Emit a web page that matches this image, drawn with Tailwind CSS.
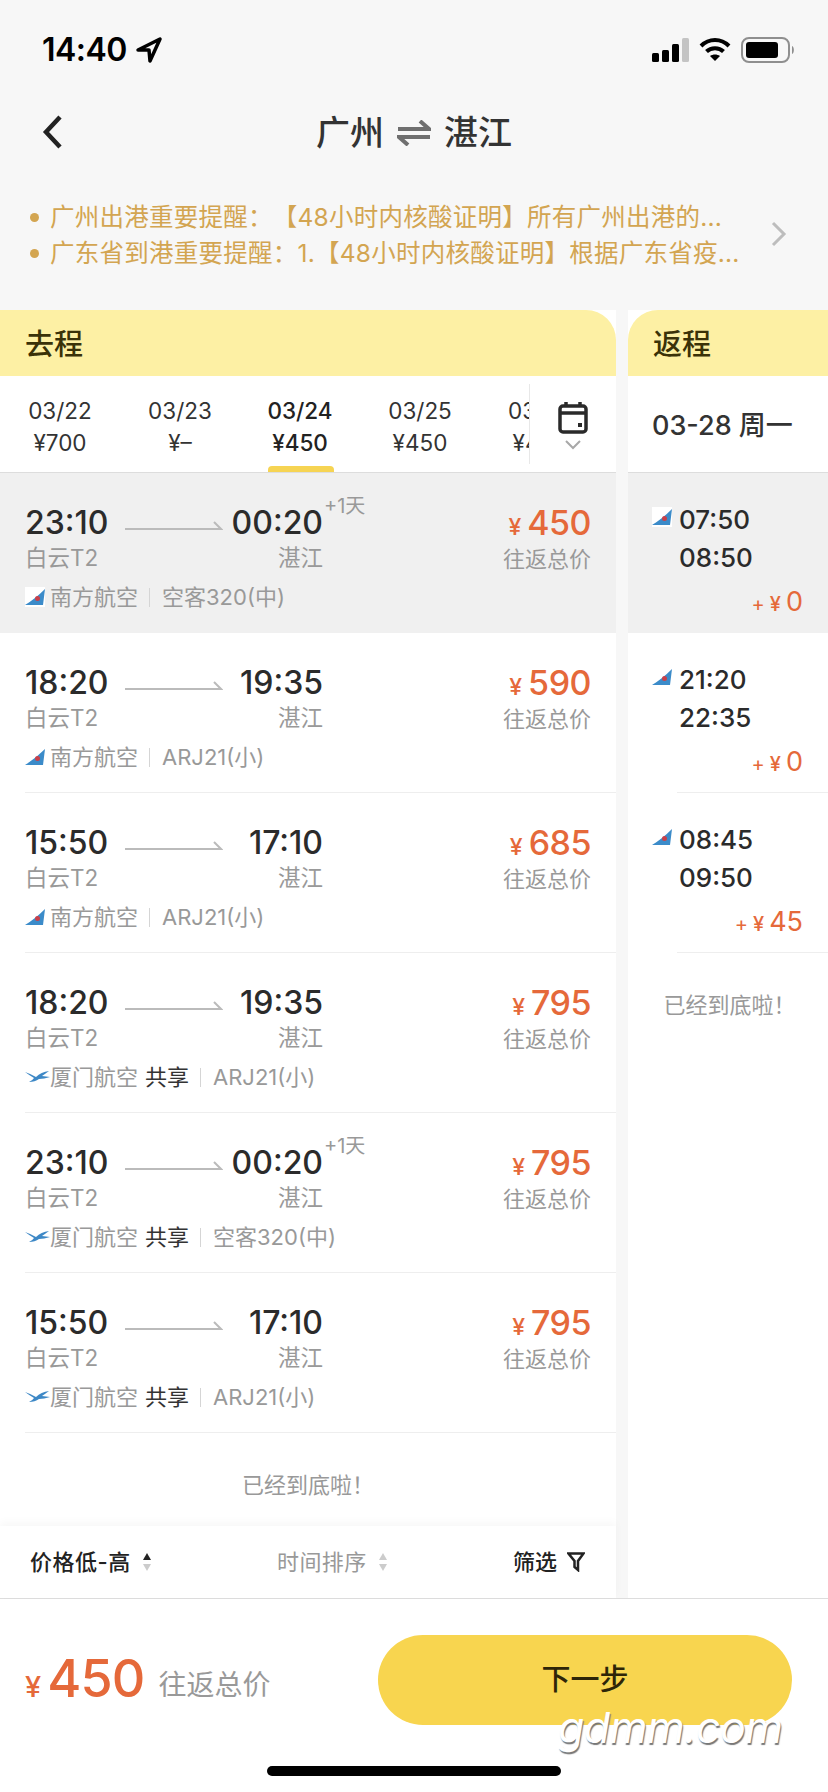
<!DOCTYPE html>
<html lang="zh">

<head>
  <meta charset="UTF-8" />
  <title>广州 湛江</title>
  <script src="https://cdn.jsdelivr.net/npm/@tailwindcss/browser@4"></script>
</head>

<body class="bg-white">
  <div class="relative w-[828px] h-[1792px] overflow-hidden flex flex-col bg-[#f7f7f7] text-[#2b2b2b] font-['Inter','Noto_Sans_CJK_SC',sans-serif]">

    <!-- status bar -->
    <div class="h-[100px] shrink-0 flex items-center justify-between pl-[42px] pr-[33px]">
      <div class="flex items-center gap-[9px]">
        <span class="text-[32px] leading-none font-semibold text-black tracking-[-0.5px]">14:40</span>
        <svg width="26" height="26" viewBox="0 0 26 26" fill="none" stroke="#000" stroke-width="3.500" stroke-linejoin="round">
          <path d="M2 13 L24 2 L14 24 L13 13 Z" />
        </svg>
      </div>
      <div class="flex items-center gap-[10px]">
        <svg width="37" height="24" viewBox="0 0 37 24" fill="#000">
          <rect x="0" y="15" width="7" height="9" rx="1.500" />
          <rect x="10" y="12" width="7" height="12" rx="1.500" />
          <rect x="20" y="6" width="7" height="18" rx="1.500" />
          <rect x="30" y="0" width="7" height="24" rx="1.500" fill="#c4c4c4" />
        </svg>
        <svg width="32" height="24" viewBox="0 0 32 24" fill="none" stroke="#000" stroke-width="4">
          <path d="M2 8 C10 0 22 0 30 8" />
          <path d="M7.500 13.500 C12 9 20 9 24.500 13.500" />
          <path d="M16 23 L11 18 C14 16 18 16 21 18 Z" fill="#000" stroke="none" />
        </svg>
        <svg width="54" height="26" viewBox="0 0 54 26" fill="none">
          <rect x="1" y="1" width="47" height="24" rx="7" stroke="#8f8f8f" stroke-width="2" />
          <rect x="5" y="5" width="32" height="16" rx="3" fill="#000" />
          <path d="M51 9 C53.500 10 53.500 16 51 17 Z" fill="#8f8f8f" />
        </svg>
      </div>
    </div>

    <!-- nav -->
    <div class="relative h-[65px] shrink-0 flex items-center justify-center">
      <svg class="absolute left-[40px] top-[15px]" width="24" height="34" viewBox="0 0 24 34" fill="none" stroke="#222" stroke-width="4.500">
        <path d="M20 2 L6 17 L20 32" />
      </svg>
      <div class="flex items-center gap-[13px] text-[34px] leading-none font-medium text-[#333]">
        <span>广州</span>
        <svg width="34" height="26" viewBox="0 0 34 26" fill="none" stroke="#6f6f6f" stroke-width="4">
          <path d="M1 9 H32 L23 1" />
          <path d="M33 17 H2 L11 25" />
        </svg>
        <span>湛江</span>
      </div>
    </div>

    <!-- notices -->
    <div class="relative h-[145px] shrink-0 pt-[34px] pl-[30px] text-[24.500px] leading-[36px] tracking-[0.25px] text-[#d3a551] [text-spacing-trim:space-all]">
      <div class="flex items-center gap-[11px]"><span class="w-[9px] h-[9px] rounded-full bg-[#d3a551]"></span><span class="whitespace-nowrap">广州出港重要提醒：【48小时内核酸证明】所有广州出港的...</span></div>
      <div class="flex items-center gap-[11px]"><span class="w-[9px] h-[9px] rounded-full bg-[#d3a551]"></span><span class="whitespace-nowrap">广东省到港重要提醒：1.【48小时内核酸证明】根据广东省疫...</span></div>
      <svg class="absolute left-[771px] top-[56px]" width="16" height="26" viewBox="0 0 16 26" fill="none" stroke="#bdbdbd" stroke-width="3">
        <path d="M2 2 L13 13 L2 24" />
      </svg>
    </div>

    <!-- two columns -->
    <div class="relative flex-1 flex gap-[12px] min-h-0">
      <div class="relative w-[616px] flex flex-col bg-white">
        <div class="h-[66px] shrink-0 rounded-tr-[30px] bg-[#fdf0a4] pl-[25px] pt-[3px] flex items-center text-[29px] font-medium text-[#3a3208]">去程</div>

        <!-- date strip -->
        <div class="relative h-[97px] shrink-0 flex border-b border-[#dddddd]">
          <div class="w-[530px] overflow-hidden flex border-r border-[#e8e8e8] my-[8px]">
            <div class="w-[120px] shrink-0 text-center text-[22.500px] leading-[32px] text-[#333] pt-[11px]">03/22<br />¥700</div>
            <div class="w-[120px] shrink-0 text-center text-[22.500px] leading-[32px] text-[#333] pt-[11px]">03/23<br />¥–</div>
            <div class="w-[120px] shrink-0 text-center text-[22.500px] leading-[32px] font-medium text-[#222] pt-[11px]">03/24<br />¥450</div>
            <div class="w-[120px] shrink-0 text-center text-[22.500px] leading-[32px] text-[#333] pt-[11px]">03/25<br />¥450</div>
            <div class="w-[120px] shrink-0 text-center text-[22.500px] leading-[32px] text-[#333] pt-[11px]">03/26<br />¥450</div>
          </div>
          <div class="flex-1 flex flex-col items-center pt-[25px]">
            <svg width="30" height="33" viewBox="0 0 30 33" fill="none" stroke="#2a2a2a" stroke-width="3.500">
              <rect x="2" y="5" width="26" height="26" rx="3" />
              <path d="M2 12 H28" />
              <path d="M8 1 V6 M22 1 V6" />
              <rect x="20" y="22" width="4" height="4" fill="#2a2a2a" stroke="none" />
            </svg>
            <svg class="mt-[6px]" width="16" height="10" viewBox="0 0 16 10" fill="none" stroke="#a8a8a8" stroke-width="2">
              <path d="M1 1 L8 8 L15 1" />
            </svg>
          </div>
          <div class="absolute left-[268px] bottom-0 w-[66px] h-[6px] rounded-t-[4px] bg-[#f6d453]"></div>
        </div>

        <div id="outbound"></div>
        <div class="pt-[36px] text-center text-[22px] leading-[32px] text-[#999]">已经到底啦！</div>

        <!-- sort bar -->
        <div class="absolute left-0 right-0 bottom-0 h-[72px] bg-white flex items-center text-[22px] font-medium shadow-[0_-4px_8px_rgba(0,0,0,0.03)]">
          <div class="w-[277px] pl-[30px] flex items-center gap-[11px] text-[#222]"><span class="tracking-[0.5px]">价格低-高</span>
            <svg width="10" height="20" viewBox="0 0 10 20"><path d="M5 1 L9 8 H1 Z" fill="#222" /><path d="M5 19 L9 12 H1 Z" fill="#ccc" /></svg>
          </div>
          <div class="w-[236px] flex items-center gap-[11px] font-normal tracking-[0.4px] text-[#999]">时间排序
            <svg width="10" height="20" viewBox="0 0 10 20"><path d="M5 1 L9 8 H1 Z" fill="#ccc" /><path d="M5 19 L9 12 H1 Z" fill="#ccc" /></svg>
          </div>
          <div class="flex items-center gap-[10px] text-[#222]">筛选
            <svg width="18" height="20" viewBox="0 0 18 20" fill="none" stroke="#222" stroke-width="2.500"><path d="M1.500 1.500 H16.500 L11 9 V18 L7.500 15 V9 Z" /></svg>
          </div>
        </div>
      </div>

      <div class="flex-1 flex flex-col bg-white">
        <div class="h-[66px] shrink-0 rounded-tl-[30px] bg-[#fdf0a4] pl-[25px] pt-[3px] flex items-center text-[29px] font-medium text-[#3a3208]">返程</div>
        <div class="h-[97px] shrink-0 flex items-center pl-[24px] pt-[4px] text-[27px] text-[#333] [font-weight:450] border-b border-[#dddddd] whitespace-nowrap">03-28 周一</div>
        <div id="inbound"></div>
        <div class="pt-[36px] pl-[3px] text-center text-[22px] leading-[32px] text-[#999]">已经到底啦！</div>
      </div>
    </div>

    <!-- bottom bar -->
    <div class="h-[194px] shrink-0 bg-white border-t border-[#dddddd] flex items-start pl-[25px]">
      <div class="flex items-baseline mt-[45px] text-[#e5693a]">
        <span class="text-[29px] font-medium mr-[6px]">¥</span>
        <span class="text-[52px] leading-[70px] font-medium tracking-[-0.8px]">450</span>
        <span class="text-[28px] ml-[14px] -translate-y-[2px] text-[#999]">往返总价</span>
      </div>
      <div class="ml-auto mr-[36px] mt-[36px] w-[414px] h-[90px] rounded-[45px] bg-[#f8d54f] flex items-center justify-center text-[29px] font-medium text-[#2e2508]">下一步</div>
    </div>

    <!-- watermark + home bar -->
    <div class="absolute left-[558px] top-[1701px] text-[43px] leading-[52px] italic text-white tracking-[-0.5px] [text-shadow:1px_2px_1px_#777]">gdmm.com</div>
    <div class="absolute left-[267px] top-[1766px] w-[294px] h-[10px] rounded-full bg-black"></div>
  </div>

  <script>
    const csn = `<svg width="21" height="20" viewBox="0 0 21 20"><rect width="20" height="20" fill="#fff"/><path d="M20 2 L18 18 H0 Q10 12 20 2 Z" fill="#3b8bc9"/><circle cx="12.500" cy="11.500" r="2.500" fill="#c9404a"/></svg>`;
    const xmn = `<svg width="25" height="12" viewBox="0 0 25 12"><path d="M0 1 Q6 3 11 6 Q16 1 24 0 Q20 3 17 5 L25 6 Q19 8 14 8 Q10 11 4 11 Q8 9 9 7 Q4 4 0 1 Z" fill="#3d88c6"/></svg>`;

    const flights = [
      { dep: '23:10', arr: '00:20', next: true, price: 450, logo: csn, name: '南方航空', plane: '空客320(中)', on: true },
      { dep: '18:20', arr: '19:35', price: 590, logo: csn, name: '南方航空', plane: 'ARJ21(小)' },
      { dep: '15:50', arr: '17:10', price: 685, logo: csn, name: '南方航空', plane: 'ARJ21(小)' },
      { dep: '18:20', arr: '19:35', price: 795, logo: xmn, name: '厦门航空', share: true, plane: 'ARJ21(小)' },
      { dep: '23:10', arr: '00:20', next: true, price: 795, logo: xmn, name: '厦门航空', share: true, plane: '空客320(中)' },
      { dep: '15:50', arr: '17:10', price: 795, logo: xmn, name: '厦门航空', share: true, plane: 'ARJ21(小)' },
    ];

    document.getElementById('outbound').innerHTML = flights.map(f => `
      <div class="relative h-[160px] pl-[25px] ${f.on ? 'bg-[#f0f0f0]' : ''}">
        <div class="flex h-full flex-col ${f.on ? '' : 'border-b border-[#eeeeee]'} pr-[25px] pt-[28px]">
          <div class="flex">
            <div class="w-[100px]">
              <div class="text-[32px] leading-[44px] font-medium">${f.dep}</div>
              <div class="text-[22.500px] leading-[26px] text-[#999]">白云T2</div>
            </div>
            <svg class="mt-[18px]" width="98" height="12" viewBox="0 0 98 12" fill="none" stroke="#bbb" stroke-width="2"><path d="M0 10 H96 L89 3" /></svg>
            <div class="relative w-[100px] text-right">
              <div class="text-[32px] leading-[44px] font-medium">${f.arr}</div>
              <div class="text-[22.500px] leading-[26px] text-[#999]">湛江</div>
              ${f.next ? '<span class="absolute left-[101px] top-[-8px] text-[20px] leading-[26px] text-[#999] whitespace-nowrap">+1天</span>' : ''}
            </div>
            <div class="ml-auto text-right">
              <div class="text-[#e5693a] leading-[44px] whitespace-nowrap"><span class="text-[23px] font-medium mr-[6px]">¥</span><span class="text-[34px] font-medium tracking-[-0.5px]">${f.price}</span></div>
              <div class="text-[22px] leading-[16px] text-[#999]">往返总价</div>
            </div>
          </div>
          <div class="mt-[13px] flex items-center h-[26px] text-[22px] text-[#999]">
            <span class="w-[25px] flex">${f.logo}</span>
            <span>${f.name}</span>
            ${f.share ? '<span class="ml-[7px] text-[#333]">共享</span>' : ''}
            <span class="ml-[11px] mr-[12px] w-px h-[19px] bg-[#d5d5d5]"></span>
            <span>${f.plane}</span>
          </div>
        </div>
      </div>`).join('');

    const returns = [
      { dep: '07:50', arr: '08:50', add: '0', on: true },
      { dep: '21:20', arr: '22:35', add: '0', line: true },
      { dep: '08:45', arr: '09:50', add: '45', line: true },
    ];

    document.getElementById('inbound').innerHTML = returns.map(r => `
      <div class="relative h-[160px] ${r.on ? 'bg-[#f0f0f0]' : ''} pl-[24px] pt-[28px]">
        <div class="flex items-center text-[26px] leading-[38px] font-medium">
          <span class="w-[27px] flex -mt-[6px]">${csn}</span>${r.dep}
        </div>
        <div class="pl-[27px] text-[26px] leading-[38px] font-medium">${r.arr}</div>
        <div class="mt-[8px] pr-[25px] text-right text-[#e5693a] leading-[34px]"><span class="text-[20px] mr-[5px]">+</span><span class="text-[20px] font-medium mr-[5px]">¥</span><span class="text-[27px]">${r.add}</span></div>
        ${r.line ? '<div class="absolute left-[49px] right-0 bottom-0 h-px bg-[#eeeeee]"></div>' : ''}
      </div>`).join('');
  </script>
</body>

</html>
